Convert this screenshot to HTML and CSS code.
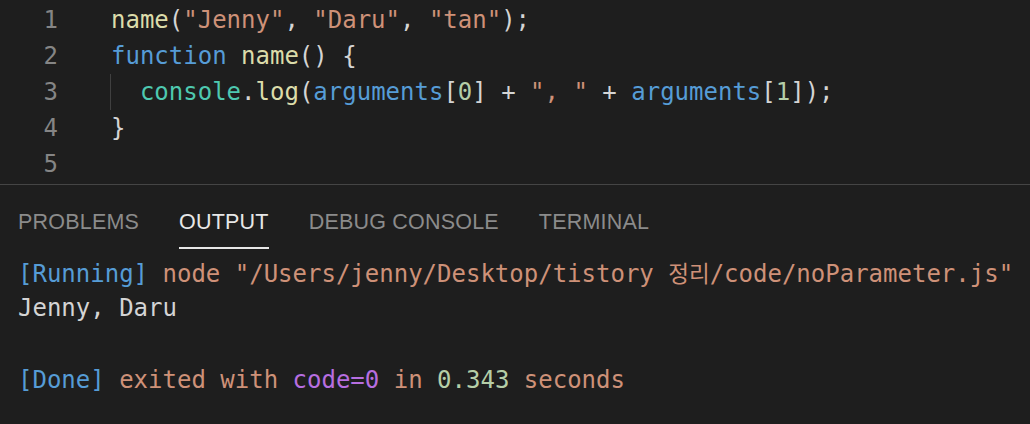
FILE: index.html
```html
<!DOCTYPE html>
<html>
<head>
<meta charset="utf-8">
<link rel="stylesheet" href="styles.css">
</head>
<body>
<div class="editor">
  <div class="line"><span class="ln">1</span><span class="code"><span class="fn">name</span><span class="p">(</span><span class="str">"Jenny"</span><span class="p">, </span><span class="str">"Daru"</span><span class="p">, </span><span class="str">"tan"</span><span class="p">);</span></span></div>
  <div class="line"><span class="ln">2</span><span class="code"><span class="kw">function</span> <span class="fn">name</span><span class="p">() {</span></span></div>
  <div class="line"><span class="ln">3</span><span class="code"><span class="indent">  </span><span class="cls">console</span><span class="p">.</span><span class="fn">log</span><span class="p">(</span><span class="kw">arguments</span><span class="p">[</span><span class="num">0</span><span class="p">] + </span><span class="str">", "</span><span class="p"> + </span><span class="kw">arguments</span><span class="p">[</span><span class="num">1</span><span class="p">]);</span></span></div>
  <div class="line"><span class="ln">4</span><span class="code"><span class="p">}</span></span></div>
  <div class="line"><span class="ln">5</span><span class="code"></span></div>
</div>
<div class="panel">
  <div class="tabs">
    <span class="tab">PROBLEMS</span>
    <span class="tab active">OUTPUT</span>
    <span class="tab">DEBUG CONSOLE</span>
    <span class="tab">TERMINAL</span>
  </div>
  <div class="output">
    <div class="oline"><span class="kw">[Running]</span> <span class="str">node "/Users/jenny/Desktop/tistory <span class="ko">정리</span>/code/noParameter.js"</span></div>
    <div class="oline"><span class="p">Jenny, Daru</span></div>
    <div class="oline"></div>
    <div class="oline"><span class="kw">[Done]</span> <span class="str">exited with</span> <span class="purple">code=0</span> <span class="str">in</span> <span class="num">0.343</span> <span class="str">seconds</span></div>
  </div>
</div>
</body>
</html>
```

FILE: styles.css
```css
html, body {
  margin: 0;
  padding: 0;
  background: #1e1e1e;
}
body {
  width: 1030px;
  height: 424px;
  overflow: hidden;
  font-family: "DejaVu Sans Mono", "Noto Sans CJK KR", monospace;
  font-size: 24px;
  color: #d4d4d4;
}
.editor {
  padding-top: 2px;
  height: 182px;
  border-bottom: 1px solid #454545;
}
.line {
  display: flex;
  height: 36px;
  line-height: 36px;
  white-space: pre;
}
.ln {
  width: 58px;
  text-align: right;
  color: #858585;
  flex: none;
}
.code {
  padding-left: 53px;
}
.indent {
  display: inline-block;
  vertical-align: top;
  height: 36px;
  margin-left: -1px;
  border-left: 1px solid #404040;
}
.fn { color: #dcdcaa; }
.str { color: #ce9178; }
.kw { color: #569cd6; }
.cls { color: #4ec9b0; }
.num { color: #b5cea8; }
.p { color: #d4d4d4; }
.purple { color: #b76ee0; }

.tabs {
  display: flex;
  gap: 40px;
  padding: 26px 0 0 18px;
  font-family: "Liberation Sans", Arial, sans-serif;
  font-size: 21.5px;
  letter-spacing: 0.2px;
  line-height: 22px;
}
.tab {
  color: #8b8b8b;
  padding-bottom: 14px;
  border-bottom: 2px solid transparent;
}
.tab.active {
  color: #e7e7e7;
  border-bottom-color: #e7e7e7;
}
.output {
  padding: 5px 0 0 18px;
}
.oline {
  height: 36px;
  line-height: 36px;
  white-space: pre;
}
.ko {
  font-family: "Noto Sans CJK KR", sans-serif;
  font-size: 22.5px;
}
```
